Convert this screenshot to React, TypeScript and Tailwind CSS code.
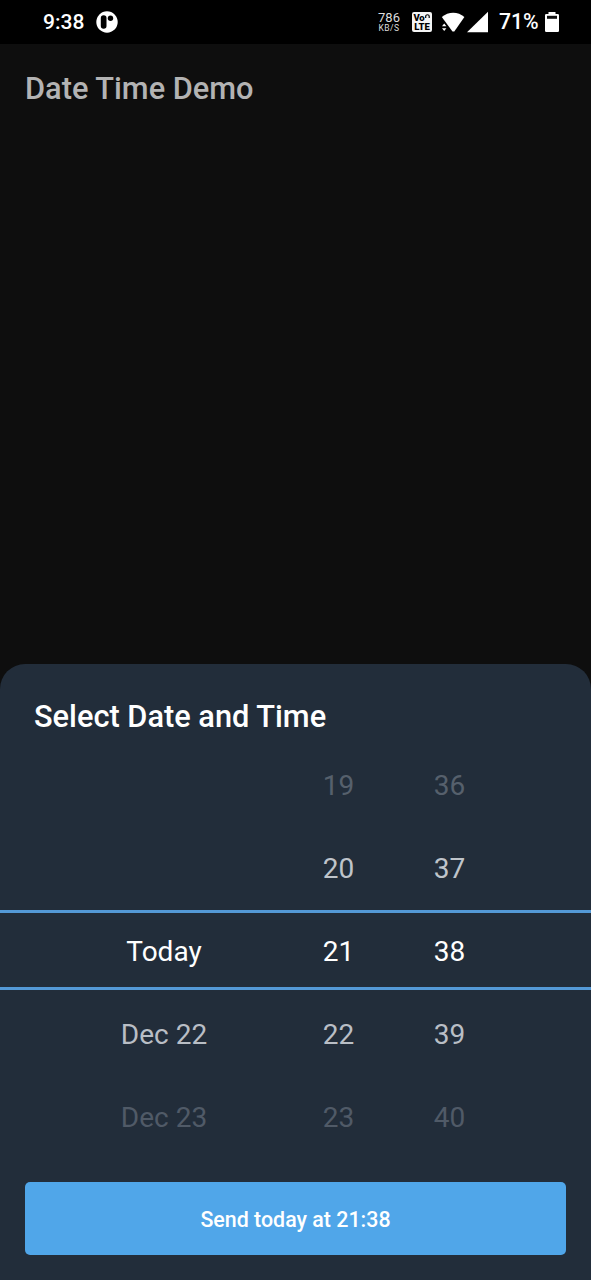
const rows = [
  { date: "", hour: "19", minute: "36", tone: "h-[83px] text-[#56606c]" },
  { date: "", hour: "20", minute: "37", tone: "h-[83px] text-[#bfc4ca]" },
  { date: "Today", hour: "21", minute: "38", tone: "mb-[3px] h-[80px] border-y-3 border-[#5499d6] pt-[3px] text-white" },
  { date: "Dec 22", hour: "22", minute: "39", tone: "h-[83px] text-[#b9bec5]" },
  { date: "Dec 23", hour: "23", minute: "40", tone: "h-[83px] text-[#505a67]" },
];

function AppBadge() {
  return (
    <svg className="ml-[11px] size-[22px]" viewBox="0 0 22 22">
      <circle cx="11" cy="11" r="10.7" fill="#fff" />
      <rect x="4.8" y="4.2" width="5.700" height="13.600" rx="2.800" fill="#000" />
      <circle cx="14.500" cy="7.300" r="2.700" fill="#000" />
    </svg>
  );
}

function VoLte() {
  return (
    <div className="ml-[12px] flex h-[20px] w-[20px] flex-col items-center rounded-[2px] bg-[#f4f4f4] pt-[1px] font-black text-black">
      <div className="flex h-[9px] items-center text-[9.5px] leading-[9px] tracking-[-0.3px]">
        Vo
        <svg className="ml-px h-[9px] w-[5px]" viewBox="0 0 5 9" fill="none" stroke="#000" strokeWidth="1.2">
          <path d="M.7 5V3.300C.7 1.200 4.200 1.200 4.200 3.300V5" />
        </svg>
      </div>
      <div className="h-[9px] text-[9.5px] leading-[9px]">LTE</div>
    </div>
  );
}

function StatusBar() {
  return (
    <div className="flex h-[44px] shrink-0 items-center bg-black pl-[43px] text-white">
      <span className="w-[42px] whitespace-nowrap text-[21px] font-medium leading-[44px]">9:38</span>
      <AppBadge />
      <div className="ml-auto flex w-[213px] items-center">
        <div className="flex w-[22px] flex-col items-center text-[#dedede]">
          <span className="text-[13px] leading-[12px]">786</span>
          <span className="text-[8.5px] leading-[8px] tracking-[0.4px]">KB/S</span>
        </div>
        <VoLte />
        <svg className="ml-[9px] h-[22px] w-[48px]" viewBox="0 0 48 22" fill="#fff">
          <path d="M.8 6C7.400.2 17 .2 23.400 6L13.300 20.500H11.500z" />
          <path d="M1 15.200l2.200-2.700 2.200 2.700zM1 17.300l2.200 2.700 2.200-2.700z" />
          <path d="M47 .8v20.400H26z" />
        </svg>
        <span className="ml-[10px] w-[39px] whitespace-nowrap text-[21.2px] font-medium tracking-[-0.1px]">71%</span>
        <svg className="ml-[7px] h-[22px] w-[14px]" viewBox="0 0 14 22">
          <path d="M3.500 3V1h7v2h2.200q1.300 0 1.300 1.300v15.400q0 1.300-1.300 1.300H1.300Q0 21 0 19.700V4.300Q0 3 1.300 3z" fill="#fff" />
          <rect x="2" y="4.800" width="10" height="3" fill="#111" />
        </svg>
      </div>
    </div>
  );
}

export default function App() {
  return (
    <div className="flex h-[1280px] w-[591px] flex-col overflow-hidden bg-[#0e0e0e] font-['Roboto',sans-serif]">
      <StatusBar />
      <header className="flex h-[90px] shrink-0 items-center pl-[25px]">
        <h1 className="whitespace-nowrap text-[30.75px] font-medium text-[#b3b3b3]">Date Time Demo</h1>
      </header>
      <section className="mt-auto flex h-[616px] shrink-0 flex-col rounded-t-[25px] bg-[#222d3a]">
        <h2 className="mt-[30px] whitespace-nowrap pl-[34px] text-[30.75px] font-medium leading-[46px] text-white">
          Select Date and Time
        </h2>
        <div className="mt-[4px] flex flex-col">
          {rows.map((row) => (
            <div
              key={row.hour}
              className={`grid grid-cols-[77px_174px_175px_47px] items-center text-center text-[28px] ${row.tone}`}
            >
              <span />
              <span>{row.date}</span>
              <span>{row.hour}</span>
              <span>{row.minute}</span>
            </div>
          ))}
        </div>
        <button className="mx-[25px] mt-[23px] h-[73px] rounded-[5px] bg-[#50a6e9] pt-[3px] text-[21.4px] font-medium text-white">
          Send today at 21:38
        </button>
      </section>
    </div>
  );
}
